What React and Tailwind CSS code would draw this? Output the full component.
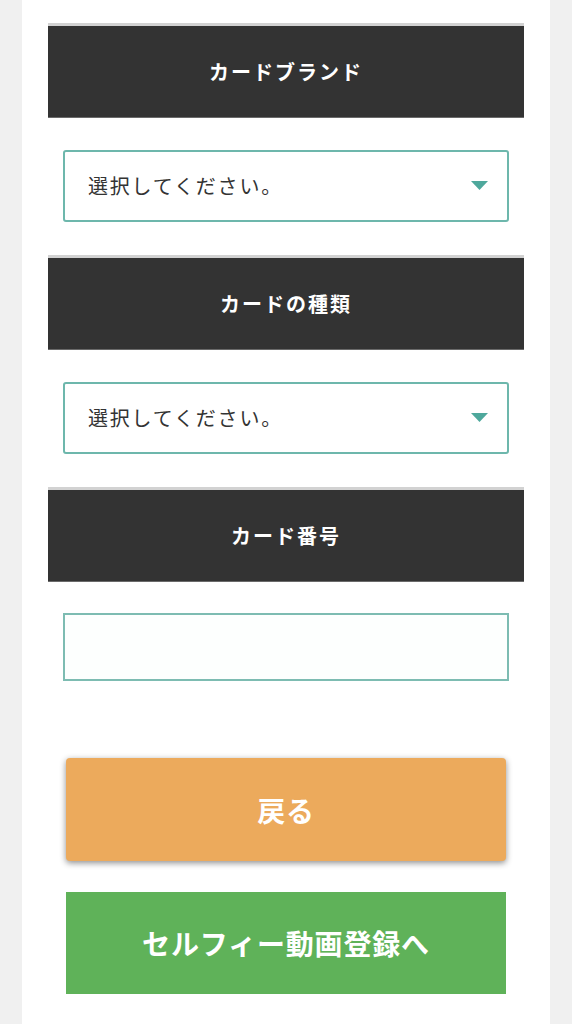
import React from 'react'

const font = { fontFamily: '"Noto Sans CJK JP", "Noto Sans", sans-serif' }

const SectionBar = ({ title }) => (
  <div className="w-full h-[95px] flex items-center justify-center bg-[#333333] border-t-[3px] border-b border-t-[#d2d2d2] border-b-[#6a6a6a]">
    <span className="text-white font-bold text-[20px] tracking-[0.1em]">{title}</span>
  </div>
)

const SelectBox = () => (
  <div className="mx-[15px] h-[72px] border-2 border-[#6db7ac] rounded-[3px] bg-white flex items-center justify-between pl-[23px] pr-[19px]">
    <span className="text-[#333333] text-[20px] tracking-[0.09em]">選択してください。</span>
    <svg width="17" height="10" viewBox="0 0 17 10">
      <polygon points="0,0 17,0 8.5,9" fill="#4ea89c" />
    </svg>
  </div>
)

export default function App() {
  return (
    <div className="min-h-screen bg-[#f0f0f0]" style={font}>
      <div className="ml-[22px] w-[528px] bg-white px-[26px] pt-[23px] pb-[30px] flex flex-col">
        <SectionBar title="カードブランド" />
        <div className="h-[32px]" />
        <SelectBox />
        <div className="h-[33px]" />
        <SectionBar title="カードの種類" />
        <div className="h-[32px]" />
        <SelectBox />
        <div className="h-[33px]" />
        <SectionBar title="カード番号" />
        <div className="h-[31px]" />
        <div className="mx-[15px] h-[68px] border-2 border-[#7dbcb2] bg-[#fdfffe]" />
        <div className="h-[77px]" />
        <button className="mx-[18px] h-[103px] rounded-[4px] bg-[#ecaa5c] shadow-[0_2px_6px_rgba(0,0,0,0.45)] text-white font-bold text-[28px] tracking-[0.03em]">
          戻る
        </button>
        <div className="h-[31px]" />
        <button className="mx-[18px] h-[102px] bg-[#5fb259] text-white font-bold text-[28px] tracking-[0.03em]">
          セルフィー動画登録へ
        </button>
      </div>
    </div>
  )
}
